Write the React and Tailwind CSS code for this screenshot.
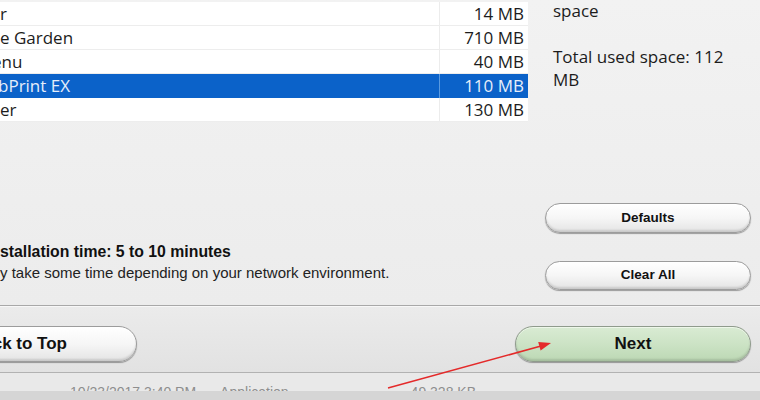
import React from "react";

const rows = [
  { name: "r", size: "14 MB", indent: 0 },
  { name: "e Garden", size: "710 MB", indent: 0 },
  { name: "enu", size: "40 MB", indent: -8 },
  { name: "bPrint EX", size: "110 MB", indent: -2, sel: true },
  { name: "er", size: "130 MB", indent: 0 },
];

function GrayButton({ children, className = "" }) {
  return (
    <div
      className={
        "flex items-center justify-center rounded-full border border-[#9c9c9c] bg-gradient-to-b from-[#ffffff] via-[#f6f6f6] to-[#e4e4e4] shadow-[inset_0_1px_0_#ffffff,inset_0_-2px_2px_rgba(0,0,0,0.12),0_1px_1px_rgba(0,0,0,0.35)] font-bold text-[#111] " +
        className
      }
      style={{ fontFamily: '"Liberation Sans", Arial, sans-serif' }}
    >
      {children}
    </div>
  );
}

export default function App() {
  return (
    <div
      className="relative w-[760px] h-[400px] overflow-hidden bg-[#f0f0f0] flex flex-col"
      style={{ fontFamily: '"Open Sans", "Noto Sans", sans-serif' }}
    >
      {/* top section */}
      <div className="h-[305px] flex bg-gradient-to-b from-[#f2f2f2] to-[#ececec]">
        <div className="w-[528px] flex flex-col">
          <div className="mt-[2px] bg-white flex flex-col">
            {rows.map((r, i) => (
              <div
                key={i}
                className={
                  "h-6 flex text-[17px] leading-[24px] " +
                  (r.sel
                    ? "bg-[#0b62c9] text-[#e6eefa]"
                    : "text-[#1c1c1c] border-b border-[#ededed]")
                }
              >
                <div
                  className={
                    "w-[440px] overflow-hidden whitespace-nowrap border-r " +
                    (r.sel ? "border-[#5a9ae0]" : "border-[#ececec]")
                  }
                >
                  <span className="inline-block" style={{ marginLeft: r.indent }}>
                    {r.name}
                  </span>
                </div>
                <div className="w-[88px] text-right pr-[4px] whitespace-nowrap">
                  {r.size}
                </div>
              </div>
            ))}
          </div>
          <div
            className="mt-[119px] text-[#111] whitespace-nowrap"
            style={{ fontFamily: '"Liberation Sans", Arial, sans-serif' }}
          >
            <div className="text-[15.8px] leading-[21px] font-bold">
              stallation time: 5 to 10 minutes
            </div>
            <div className="text-[15px] leading-[21px] text-[#222]">
              y take some time depending on your network environment.
            </div>
          </div>
        </div>
        <div className="ml-[17px] w-[206px] flex flex-col">
          <div className="-mt-[1px] pl-[8px] text-[17px] leading-[23px] text-[#1c1c1c] whitespace-nowrap">
            <div>space</div>
            <div>&nbsp;</div>
            <div>Total used space: 112</div>
            <div>MB</div>
          </div>
          <GrayButton className="mt-[112px] h-[30px] text-[13.5px]">Defaults</GrayButton>
          <GrayButton className="mt-[28px] h-[29px] text-[13.5px]">Clear All</GrayButton>
        </div>
      </div>

      {/* separator */}
      <div className="h-px bg-[#a8a8a8]" />
      <div className="h-px bg-[#f7f7f7]" />

      {/* bottom buttons */}
      <div className="h-[65px] flex items-start pt-[19px] pr-[9px] bg-gradient-to-b from-[#ebebeb] to-[#e2e2e2]">
        <GrayButton className="ml-[-99px] w-[236px] h-[36px] text-[17px]">Back to Top</GrayButton>
        <div
          className="ml-auto w-[236px] h-[36px] flex items-center justify-center rounded-full border border-[#8f9b8c] bg-gradient-to-b from-[#d9ebd3] via-[#cce3c5] to-[#bcd8b4] shadow-[inset_0_1px_0_#eef7ea,inset_0_-2px_2px_rgba(0,0,0,0.12),0_1px_1px_rgba(0,0,0,0.35)] font-bold text-[17px] text-[#111]"
          style={{ fontFamily: '"Liberation Sans", Arial, sans-serif' }}
        >
          Next
        </div>
      </div>

      <div className="h-px bg-[#b2b2b2]" />

      {/* faded file row */}
      <div
        className="h-[18px] overflow-hidden bg-[#e9e9e9] flex pt-[12px] text-[14px] leading-[14px] text-[#8e8e8e] whitespace-nowrap"
        style={{ fontFamily: '"Liberation Sans", Arial, sans-serif' }}
      >
        <span className="ml-[70px]">10/23/2017 3:40 PM</span>
        <span className="ml-[24px]">Application</span>
        <span className="ml-[122px]">49,328 KB</span>
      </div>
      <div className="flex-1 bg-[#d5d5d5]" />

      {/* red annotation arrow */}
      <svg
        className="absolute left-0 top-0 pointer-events-none"
        width="760"
        height="400"
        viewBox="0 0 760 400"
      >
        <line x1="388" y1="388" x2="541" y2="346" stroke="#e42a2a" strokeWidth="1.6" />
        <polygon points="551,343 540.6,350.5 538.2,341.9" fill="#e42a2a" />
      </svg>
    </div>
  );
}
